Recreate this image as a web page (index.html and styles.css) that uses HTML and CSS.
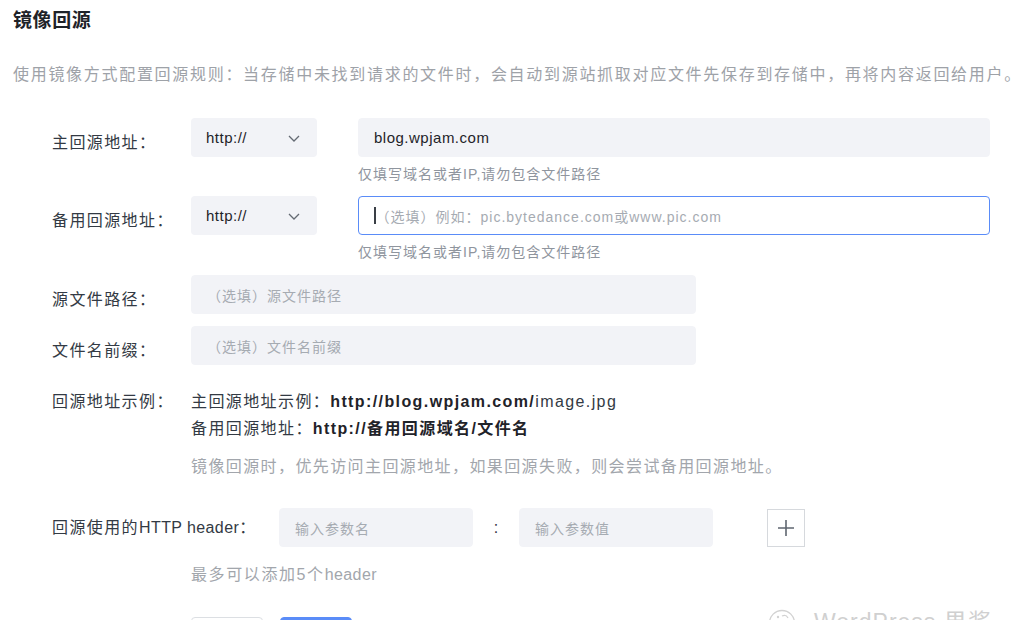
FILE: index.html
```html
<!DOCTYPE html>
<html lang="zh-CN">
<head>
<meta charset="utf-8">
<title>镜像回源</title>
<link rel="stylesheet" href="styles.css">
</head>
<body>
<div class="page">
  <h1 class="title">镜像回源</h1>
  <p class="desc">使用镜像方式配置回源规则：当存储中未找到请求的文件时，会自动到源站抓取对应文件先保存到存储中，再将内容返回给用户。</p>

  <div class="form">
    <div class="row row-1">
      <div class="label">主回源地址：</div>
      <div class="field">
        <div class="controls">
          <div class="select"><span>http://</span>
            <svg class="chev" width="12" height="7" viewBox="0 0 12 7"><polyline points="1,1 6,6 11,1" fill="none" stroke="#646a73" stroke-width="1.3"/></svg>
          </div>
          <div class="input wide value">blog.wpjam.com</div>
        </div>
        <div class="hint">仅填写域名或者IP,请勿包含文件路径</div>
      </div>
    </div>

    <div class="row row-2">
      <div class="label">备用回源地址：</div>
      <div class="field">
        <div class="controls">
          <div class="select"><span>http://</span>
            <svg class="chev" width="12" height="7" viewBox="0 0 12 7"><polyline points="1,1 6,6 11,1" fill="none" stroke="#646a73" stroke-width="1.3"/></svg>
          </div>
          <div class="input wide focus"><span class="caret"></span><span class="ph">（选填）例如：pic.bytedance.com或www.pic.com</span></div>
        </div>
        <div class="hint">仅填写域名或者IP,请勿包含文件路径</div>
      </div>
    </div>

    <div class="row row-3">
      <div class="label">源文件路径：</div>
      <div class="input mid"><span class="ph">（选填）源文件路径</span></div>
    </div>

    <div class="row row-4">
      <div class="label">文件名前缀：</div>
      <div class="input mid"><span class="ph">（选填）文件名前缀</span></div>
    </div>

    <div class="row row-5">
      <div class="label label-text">回源地址示例：</div>
      <div class="examples">
        <div class="ex-line">主回源地址示例：<b>http://blog.wpjam.com/</b>image.jpg</div>
        <div class="ex-line">备用回源地址：<b>http://备用回源域名/文件名</b></div>
        <div class="ex-note">镜像回源时，优先访问主回源地址，如果回源失败，则会尝试备用回源地址。</div>
      </div>
    </div>

    <div class="row row-6">
      <div class="label label-wide">回源使用的<span class="latin">HTTP header</span>：</div>
      <div class="input small"><span class="ph">输入参数名</span></div>
      <div class="colon">:</div>
      <div class="input small"><span class="ph">输入参数值</span></div>
      <div class="plus">
        <svg width="18" height="18" viewBox="0 0 18 18"><path d="M9 1V17M1 9H17" stroke="#5f6670" stroke-width="1.6" fill="none"/></svg>
      </div>
    </div>

    <div class="max-hint">最多可以添加5个<span class="latin">header</span></div>

    <div class="buttons">
      <div class="btn btn-default"></div>
      <div class="btn btn-primary"></div>
    </div>
  </div>
</div>

<div class="watermark">
  <svg class="wm-icon" width="28" height="28" viewBox="0 0 28 28"><circle cx="14" cy="14" r="12.5" fill="none" stroke="#d2d2d2" stroke-width="1.3"/><circle cx="10" cy="8" r="1.2" fill="#d2d2d2"/><path d="M14 7 q4 -2 6 2" fill="none" stroke="#d2d2d2" stroke-width="1.3"/></svg>
  <span class="wm-text">WordPress 果酱</span>
</div>
</body>
</html>
```

FILE: styles.css
```css
* {
  box-sizing: border-box;
}

html,
body {
  margin: 0;
  padding: 0;
  overflow: hidden;
  background: #ffffff;
}

body {
  width: 1024px;
  height: 620px;
  position: relative;
  font-family: "Liberation Sans", "Noto Sans CJK SC", sans-serif;
  color: #1f2329;
}

.page {
  padding: 8px 0 0 13px;
}

.title {
  margin: 0;
  font-size: 19px;
  line-height: 26px;
  font-weight: 700;
  letter-spacing: 0.6px;
  color: #1f2329;
}

.desc {
  margin: 29px 0 0;
  font-size: 16px;
  line-height: 24px;
  letter-spacing: 1.7px;
  color: #9ea2a8;
  white-space: nowrap;
}

.form {
  margin: 31px 0 0 39px;
}

.row {
  display: flex;
  align-items: flex-start;
}

.label {
  flex: none;
  width: 139px;
  height: 39px;
  padding-top: 10px;
  line-height: 29px;
  font-size: 16px;
  letter-spacing: 1.4px;
  color: #333a44;
  white-space: nowrap;
}

.latin {
  letter-spacing: 0.4px;
}

.row-2 {
  margin-top: 12px;
}

.row-3 {
  margin-top: 13px;
}

.row-4 {
  margin-top: 12px;
}

.row-5 {
  margin-top: 23px;
}

.row-6 {
  margin-top: 29px;
  align-items: center;
}

.controls {
  display: flex;
}

.select {
  flex: none;
  width: 126px;
  height: 39px;
  background: #f2f3f7;
  border-radius: 4px;
  display: flex;
  align-items: center;
  justify-content: space-between;
  padding: 0 17px 0 15px;
  font-size: 15px;
  letter-spacing: 0.5px;
  color: #1f2329;
}

.chev {
  display: block;
  margin-top: 2px;
}

.input {
  height: 39px;
  background: #f2f3f7;
  border: 1px solid #f2f3f7;
  border-radius: 4px;
  padding: 0 15px;
  display: flex;
  align-items: center;
  font-size: 15px;
  letter-spacing: 0.5px;
  white-space: nowrap;
}

.value {
  color: #1f2329;
}

.wide {
  width: 632px;
  margin-left: 41px;
}

.mid {
  width: 505px;
}

.small {
  width: 194px;
}

.focus {
  background: #ffffff;
  border-color: #5a8cf8;
}

.caret {
  display: inline-block;
  width: 1.5px;
  height: 17px;
  background: #3a3f46;
}

.ph {
  font-size: 14px;
  letter-spacing: 1px;
  color: #a6abb2;
}

.hint {
  margin: 7px 0 0 167px;
  font-size: 14px;
  line-height: 20px;
  letter-spacing: 1px;
  color: #8f959e;
  white-space: nowrap;
}

.label-text {
  height: auto;
  padding-top: 0;
  line-height: 27px;
}

.examples {
  font-size: 16px;
  letter-spacing: 1.4px;
}

.ex-line {
  line-height: 27px;
  color: #333a44;
  white-space: nowrap;
}

.ex-line b {
  font-weight: 700;
  color: #1f2329;
}

.ex-note {
  margin-top: 13px;
  line-height: 24px;
  color: #a2a6ac;
  white-space: nowrap;
}

.label-wide {
  width: 227px;
  padding-top: 0;
  line-height: 39px;
}

.colon {
  width: 46px;
  text-align: center;
  font-size: 16px;
  color: #333a44;
}

.plus {
  width: 38px;
  height: 38px;
  margin-left: 54px;
  border: 1px solid #d6d9dd;
  display: flex;
  align-items: center;
  justify-content: center;
}

.plus svg {
  display: block;
}

.max-hint {
  margin: 16px 0 0 139px;
  font-size: 16px;
  line-height: 24px;
  letter-spacing: 1.6px;
  color: #a2a6ac;
}

.buttons {
  margin: 30px 0 0 139px;
  display: flex;
  gap: 17px;
}

.btn {
  width: 72px;
  height: 36px;
  border-radius: 4px;
}

.btn-default {
  border: 1px solid #dcdfe3;
  background: #fff;
}

.btn-primary {
  border: 1px solid #5a8cf8;
  background: #5a8cf8;
}

.watermark {
  position: absolute;
  left: 768px;
  top: 609px;
  display: flex;
  align-items: flex-start;
  gap: 18px;
}

.wm-icon {
  display: block;
  flex: none;
}

.wm-text {
  font-size: 23px;
  line-height: 23px;
  margin-top: 2px;
  color: #d0d0d0;
  letter-spacing: 1px;
  white-space: nowrap;
}
```
